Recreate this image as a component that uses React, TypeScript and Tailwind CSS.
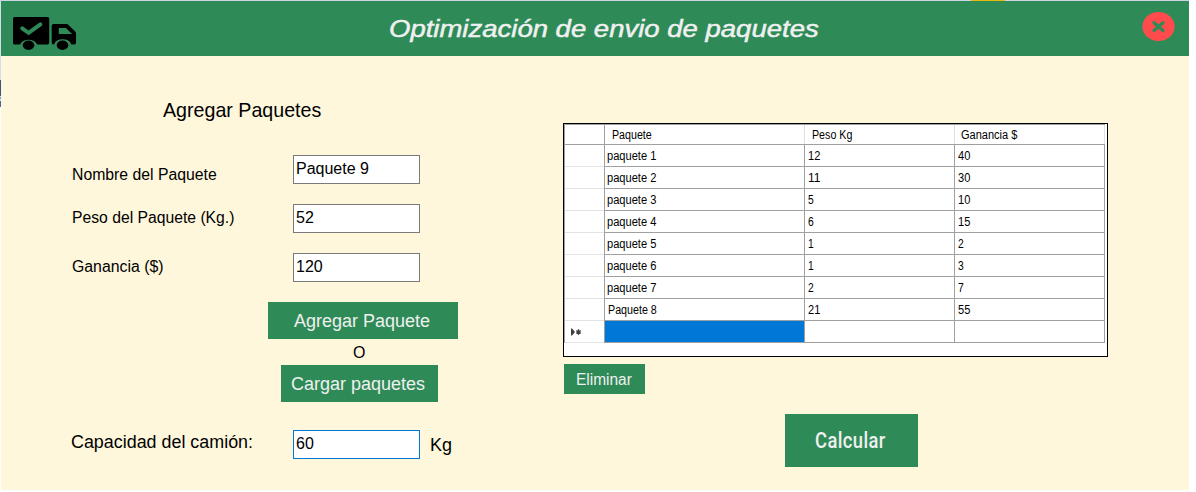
import React from "react";

const rows: [string, string, string][] = [
  ["paquete 1", "12", "40"],
  ["paquete 2", "11", "30"],
  ["paquete 3", "5", "10"],
  ["paquete 4", "6", "15"],
  ["paquete 5", "1", "2"],
  ["paquete 6", "1", "3"],
  ["paquete 7", "2", "7"],
  ["Paquete 8", "21", "55"],
];

/* Single line of text fitted to a given width. */
function Fit({ text, width, size, className = "" }: { text: string; width: number; size: number; className?: string }) {
  const ref = React.useRef<HTMLSpanElement>(null);
  const [scale, setScale] = React.useState(1);
  React.useLayoutEffect(() => {
    if (ref.current) setScale(width / ref.current.offsetWidth);
  }, [width, size, text]);
  return (
    <span className="flex justify-start" style={{ width }}>
      <span
        ref={ref}
        className={"block shrink-0 origin-left whitespace-pre leading-none " + className}
        style={{ fontSize: size, transform: `scaleX(${scale})` }}
      >
        {text}
      </span>
    </span>
  );
}

function Truck() {
  return (
    <svg className="block h-[35px] w-[66px]" viewBox="0 0 66 35">
      <path fill="#000" d="M2.5 1H35.5Q37.2 1 37.2 2.5V26.5Q37.2 28.6 35.2 28.6H25.2A9.2 7.5 0 0 0 8 28.6H2.5Q1 28.6 1 27V2.5Q1 1 2.5 1Z" />
      <path d="M10.2 12.4L16.6 16.8L28.4 8.4" fill="none" stroke="#2e8b57" strokeWidth="3.9" strokeLinecap="round" />
      <path fill="#000" fillRule="evenodd" d="M41.5 8H54.5Q55.5 8 56.3 8.7L63.2 15.5Q64 16.3 64 17.5V27Q64 28.4 62.5 28.4H59.4A9.2 7.5 0 0 0 42 28.4H41.2Q39.7 28.4 39.7 27V10Q39.7 8 41.5 8ZM46.8 12V18H60L54 12Z" />
      <ellipse cx="16.5" cy="29.2" rx="5.8" ry="4.7" />
      <ellipse cx="50.5" cy="29.2" rx="5.8" ry="4.7" />
    </svg>
  );
}

function Field({ label, width, top, value, labelTop }: { label: string; width: number; top: string; value: string; labelTop: string }) {
  return (
    <div className={"flex h-[29px] " + top}>
      <div className={"w-[221px] shrink-0 " + labelTop}>
        <Fit text={label} width={width} size={16} />
      </div>
      <div className="h-[29px] w-[127px] border border-[#7a7a7a] bg-white pt-[5px] pl-[2px]">
        <Fit text={value} width={value === "Paquete 9" ? 73 : value === "120" ? 27 : 18} size={16} />
      </div>
    </div>
  );
}

export default function App() {
  return (
    <div className="h-[492px] w-[1196px] overflow-hidden bg-white font-['Liberation_Sans',Arial,sans-serif] text-black">
      <div className="flex h-px">
        <div className="w-[971px] bg-[#cbd5e3]" />
        <div className="w-[34px] bg-[#e8b90d]" />
        <div className="w-[184px] bg-[#cbd5e3]" />
      </div>
      <div className="flex h-[489px]">
        <div className="w-px bg-[#d5dcec] pt-[79px]">
          <div className="h-4 bg-[#40547f]" />
          <div className="mt-[1px] h-[2px] bg-[#5aa8dd]" />
          <div className="mt-[2px] h-[6px] bg-[#53658f]" />
          <div className="h-[383px] bg-white" />
        </div>
        <div className="w-[1188px] bg-[#fff7dc]">
          <header className="flex h-[55px] bg-[#2e8b57]">
            <div className="w-[388px] pt-[15px] pl-[11px]"><Truck /></div>
            <h1 className="w-[753px] pt-[16px] text-[#f0f0f0]">
              <Fit text="Optimización de envio de paquetes" width={430} size={24.5} className="italic [-webkit-text-stroke:0.5px_#f0f0f0]" />
            </h1>
            <button className="mt-[11px] h-[30px] w-[33px]" aria-label="Cerrar">
              <svg className="block h-[30px] w-[33px]" viewBox="0 0 33 30">
                <ellipse cx="16.5" cy="14.6" rx="16.1" ry="14.5" fill="#ff4b4b" />
                <path d="M12 10.7L21 18.5M21 10.7L12 18.5" stroke="#2e8b57" strokeWidth="3.3" strokeLinecap="round" />
              </svg>
            </button>
          </header>
          <main className="flex">
            <section className="w-[562px] pl-[71px]">
              <h2 className="pt-[43px] pl-[91px]">
                <Fit text="Agregar Paquetes" width={158} size={21} />
              </h2>
              <Field label="Nombre del Paquete" width={145} top="mt-[35px]" labelTop="pt-[12px]" value="Paquete 9" />
              <Field label="Peso del Paquete (Kg.)" width={162} top="mt-[20px]" labelTop="pt-[6px]" value="52" />
              <Field label="Ganancia ($)" width={92} top="mt-[20px]" labelTop="pt-[6px]" value="120" />
              <div className="mt-[20px] ml-[196px] flex w-[190px] flex-col items-center">
                <button className="flex h-[37px] w-[190px] items-center justify-center bg-[#2e8b57] pr-[2px] text-[#f0f0f0]">
                  <Fit text="Agregar Paquete" width={136} size={18} />
                </button>
                <div className="flex h-[26px] items-center pt-px pr-2">
                  <Fit text="O" width={12} size={16} />
                </div>
                <button className="mr-[7px] flex h-[37px] w-[157px] items-center justify-center bg-[#2e8b57] pr-[3px] text-[#f0f0f0]">
                  <Fit text="Cargar paquetes" width={134} size={18} />
                </button>
              </div>
              <div className="mt-[28px] flex h-[29px]">
                <div className="w-[221px] shrink-0 pt-[4px]">
                  <div className="-ml-px"><Fit text="Capacidad del camión:" width={182} size={17.5} /></div>
                </div>
                <div className="h-[29px] w-[127px] border border-[#0078d7] bg-white pt-[5px] pl-[2px]">
                  <Fit text="60" width={18} size={16} />
                </div>
                <div className="pt-[6px] pl-[10px]"><Fit text="Kg" width={22} size={18} /></div>
              </div>
            </section>
            <section className="pt-[67px]">
              <div className="h-[234px] w-[545px] border border-black bg-white">
                <div className="w-[541px] border-t border-l border-[#a0a0a0] text-[12px]">
                  <div className="flex h-5 border-b border-[#a0a0a0]">
                    <div className="w-10 border-r border-[#a0a0a0]" />
                    <div className="w-[200px] border-r border-[#e0e0e0] pt-[4px] pl-[7px]"><Fit text="Paquete" width={40} size={12} /></div>
                    <div className="w-[150px] border-r border-[#e0e0e0] pt-[4px] pl-[7px]"><Fit text="Peso Kg" width={40} size={12} /></div>
                    <div className="w-[150px] border-r border-[#e0e0e0] pt-[4px] pl-[6px]"><Fit text="Ganancia $" width={56} size={12} /></div>
                  </div>
                  {rows.map((r) => (
                    <div className="flex h-[22px]" key={r[0]}>
                      <div className="w-[39px] border-b border-[#e3e3e3]" />
                      <div className={"w-[201px] border-x border-b border-[#a0a0a0] pt-[5px] " + (r[0] === "Paquete 8" ? "pl-[3px]" : "pl-[2px]")}>
                        <Fit text={r[0]} width={49} size={12} />
                      </div>
                      <div className="w-[150px] border-r border-b border-[#a0a0a0] pt-[5px] pl-[3px]">
                        <Fit text={r[1]} width={r[1].length * 6} size={12} />
                      </div>
                      <div className="w-[150px] border-r border-b border-[#a0a0a0] pt-[5px] pl-[3px]">
                        <Fit text={r[2]} width={r[2].length * 6} size={12} />
                      </div>
                    </div>
                  ))}
                  <div className="flex h-[22px]">
                    <div className="w-[39px] border-b border-[#e3e3e3] pt-[7px] pl-[6px]">
                      <svg className="block h-[8px] w-[11px]" viewBox="0 0 11 8">
                        <path d="M0 0.5H1L4 4L1 7.5H0Z" fill="#404040" />
                        <path d="M7.5 1.3V6.7M5.3 2.6L9.7 5.4M9.7 2.6L5.3 5.4" stroke="#404040" strokeWidth="1.3" />
                      </svg>
                    </div>
                    <div className="w-[201px] border-x border-b border-[#a0a0a0] bg-[#0078d7]" />
                    <div className="w-[150px] border-r border-b border-[#a0a0a0]" />
                    <div className="w-[150px] border-r border-b border-[#a0a0a0]" />
                  </div>
                </div>
              </div>
              <button className="mt-[7px] ml-px flex h-[30px] w-[81px] items-center justify-center bg-[#2e8b57] pt-[2px] pr-px text-[#f0f0f0]">
                <Fit text="Eliminar" width={56} size={16} />
              </button>
              <button className="mt-[20px] ml-[222px] flex h-[53px] w-[133px] items-center justify-center bg-[#2e8b57] pr-[2px] text-[#f0f0f0]">
                <Fit text="Calcular" width={71} size={22.5} className="font-['Liberation_Sans_Narrow','Roboto',sans-serif] font-medium tracking-[0.5px]" />
              </button>
            </section>
          </main>
        </div>
      </div>
    </div>
  );
}
